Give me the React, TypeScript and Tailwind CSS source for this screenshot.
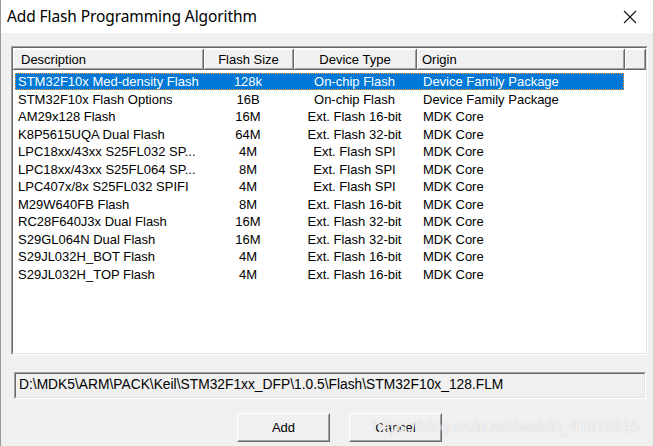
import React from "react";

type Row = {
  desc: string;
  size: string;
  type: string;
  origin: string;
};

const rows: Row[] = [
  { desc: "STM32F10x Med-density Flash", size: "128k", type: "On-chip Flash", origin: "Device Family Package" },
  { desc: "STM32F10x Flash Options", size: "16B", type: "On-chip Flash", origin: "Device Family Package" },
  { desc: "AM29x128 Flash", size: "16M", type: "Ext. Flash 16-bit", origin: "MDK Core" },
  { desc: "K8P5615UQA Dual Flash", size: "64M", type: "Ext. Flash 32-bit", origin: "MDK Core" },
  { desc: "LPC18xx/43xx S25FL032 SP...", size: "4M", type: "Ext. Flash SPI", origin: "MDK Core" },
  { desc: "LPC18xx/43xx S25FL064 SP...", size: "8M", type: "Ext. Flash SPI", origin: "MDK Core" },
  { desc: "LPC407x/8x S25FL032 SPIFI", size: "4M", type: "Ext. Flash SPI", origin: "MDK Core" },
  { desc: "M29W640FB Flash", size: "8M", type: "Ext. Flash 16-bit", origin: "MDK Core" },
  { desc: "RC28F640J3x Dual Flash", size: "16M", type: "Ext. Flash 32-bit", origin: "MDK Core" },
  { desc: "S29GL064N Dual Flash", size: "16M", type: "Ext. Flash 32-bit", origin: "MDK Core" },
  { desc: "S29JL032H_BOT Flash", size: "4M", type: "Ext. Flash 16-bit", origin: "MDK Core" },
  { desc: "S29JL032H_TOP Flash", size: "4M", type: "Ext. Flash 16-bit", origin: "MDK Core" },
];

const headerCell =
  "h-full shrink-0 border-r border-b border-[#696969] shadow-[inset_1px_1px_0_#ffffff,inset_-1px_-1px_0_#a0a0a0] pt-[1px] leading-[20px]";

function WinButton({ label }: { label: string }) {
  return (
    <button className="w-[93px] h-[29px] border border-t-white border-l-white border-b-[#696969] border-r-[#696969] bg-[#f0f0f0]">
      <div className="w-full h-full flex items-center justify-center border border-transparent border-b-[#a0a0a0] border-r-[#a0a0a0] text-[13px] text-black">
        {label}
      </div>
    </button>
  );
}

export default function App() {
  return (
    <div className="relative w-[654px] h-[446px] overflow-hidden bg-[#f0f0f0] border-l border-r border-l-[#999999] border-r-[#d0d0d0] font-['Liberation_Sans',Arial,sans-serif] text-black">
      {/* Title bar */}
      <div className="h-[33px] bg-white flex items-center justify-between pl-[6px] pr-[16px]">
        <span className="font-['Noto_Sans',sans-serif] text-[15.5px] text-black tracking-[-0.1px]">
          Add Flash Programming Algorithm
        </span>
        <svg width="14" height="14" viewBox="0 0 14 14" className="mt-[1px]">
          <path d="M1 1 L13 13 M13 1 L1 13" stroke="#111" strokeWidth="1.1" />
        </svg>
      </div>

      {/* Body */}
      <div className="pl-[10px] pr-[5px] pt-[13px]">
        {/* List box */}
        <div className="h-[309px] border border-t-[#a0a0a0] border-l-[#a0a0a0] border-b-white border-r-white">
          <div className="h-full bg-white border border-t-[#696969] border-l-[#696969] border-b-[#e3e3e3] border-r-[#e3e3e3] text-[13px]">
            {/* Header */}
            <div className="flex h-[21px] mt-[1px] bg-[#f0f0f0]">
              <div className={`${headerCell} w-[191px] pl-[8px]`}>Description</div>
              <div className={`${headerCell} w-[90px] text-center`}>Flash Size</div>
              <div className={`${headerCell} w-[123px] text-center`}>Device Type</div>
              <div className={`${headerCell} w-[208px] pl-[5px]`}>Origin</div>
              <div className={`${headerCell} flex-1`} />
            </div>

            {/* Rows */}
            <div className="mt-[2.5px] ml-[2px]">
              {rows.map((r, i) => {
                const sel = i === 0;
                return (
                  <div
                    key={r.desc}
                    className={`flex w-[609px] h-[17.55px] pt-[2.5px] leading-[14.9px] whitespace-nowrap ${
                      sel
                        ? "bg-[#0078d7] text-white outline-1 outline-dotted outline-[#ff9a3a] -outline-offset-1"
                        : ""
                    }`}
                  >
                    <div className="w-[188px] pl-[3px]">{r.desc}</div>
                    <div className="w-[90px] text-center">{r.size}</div>
                    <div className="w-[123px] text-center">{r.type}</div>
                    <div className="w-[208px] pl-[7px]">{r.origin}</div>
                  </div>
                );
              })}
            </div>
          </div>
        </div>

        {/* Path field */}
        <div className="mt-[17px] ml-[3px] mr-[2px] h-[27px] border border-t-[#a0a0a0] border-l-[#a0a0a0] border-b-white border-r-white">
          <div className="h-full border border-t-[#696969] border-l-[#696969] border-b-[#e3e3e3] border-r-[#e3e3e3] flex items-center pl-[3px] text-[13.8px] text-black">
            D:\MDK5\ARM\PACK\Keil\STM32F1xx_DFP\1.0.5\Flash\STM32F10x_128.FLM
          </div>
        </div>

        {/* Buttons */}
        <div className="mt-[14px] flex gap-[19px] pl-[226px]">
          <WinButton label="Add" />
          <WinButton label="Cancel" />
        </div>
      </div>

      {/* Watermark */}
      <div className="absolute left-[372px] top-[418px] text-[15.7px] leading-[18px] text-white/80 [text-shadow:0_0_1px_#b8b8b8] pointer-events-none whitespace-nowrap">
        https://blog.csdn.net/weixin_41875615
      </div>
    </div>
  );
}
